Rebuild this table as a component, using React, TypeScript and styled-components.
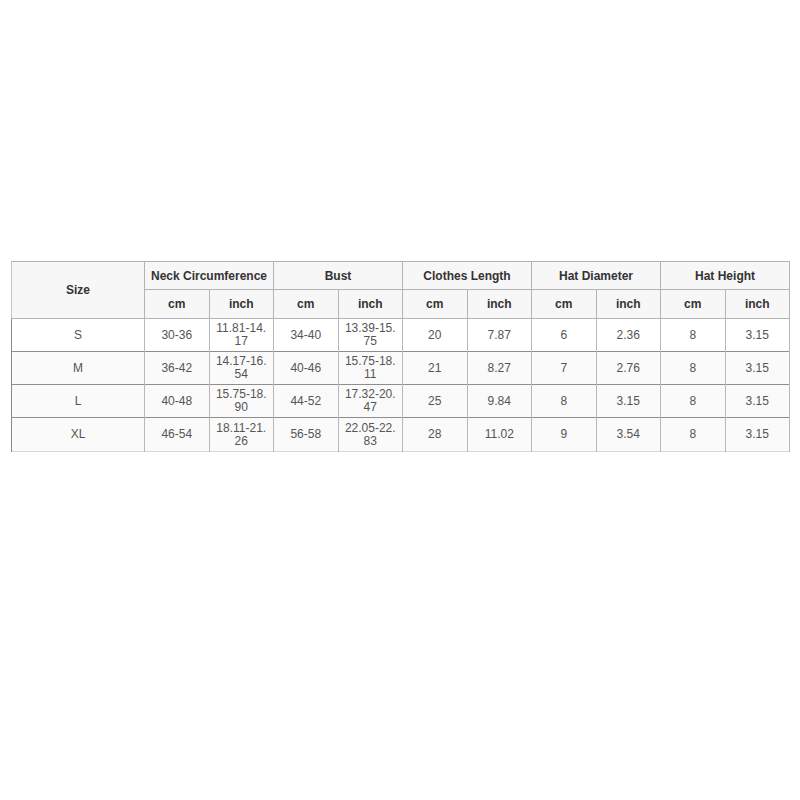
import React from 'react';
import styled, {createGlobalStyle} from 'styled-components';

const GlobalStyle = createGlobalStyle`
  body {
    margin: 0;
    background: #fff;
    font-family: "Liberation Sans", Arial, sans-serif;
  }
`;

const Page = styled.div`
  width: 800px;
  height: 800px;
  padding: 261px 0 0 11px;
  box-sizing: border-box;
`;

const Table = styled.table`
  width: 779px;
  border-collapse: collapse;
  table-layout: fixed;
  border-left: 1px solid #8a8a8a;
  border-right: 1px solid #a8a8a8;
  border-top: 1px solid #a0a0a0;
  border-bottom: 1px solid #d8d8d8;
`;

const Head = styled.th<{ $tall?: boolean }>`
  background: #f7f7f7;
  color: #333;
  font-size: 12px;
  font-weight: bold;
  height: ${(p) => (p.$tall ? 27 : 28)}px;
  padding: 0;
  text-align: center;
  border: 1px solid #b4b4b4;
  border-left-color: #c4c4c4;
`;

const Row = styled.tr<{ $shade?: boolean }>`
  background: ${(p) => (p.$shade ? '#fafafa' : '#fff')};
`;

const Cell = styled.td<{ $first?: boolean; $last?: boolean }>`
  height: ${(p) => (p.$last ? 33 : 32)}px;
  padding: 0 2px;
  text-align: center;
  color: #555;
  font-size: 12px;
  line-height: 13px;
  white-space: pre-line;
  border-left: 1px solid ${(p) => (p.$first ? '#8a8a8a' : '#b8b8b8')};
  border-right: 1px solid #b8b8b8;
  border-top: 1px solid #8e8e8e;
`;

const groups = ['Neck Circumference', 'Bust', 'Clothes Length', 'Hat Diameter', 'Hat Height'];

const rows = [
  ['S', '30-36', '11.81-14.\n17', '34-40', '13.39-15.\n75', '20', '7.87', '6', '2.36', '8', '3.15'],
  ['M', '36-42', '14.17-16.\n54', '40-46', '15.75-18.\n11', '21', '8.27', '7', '2.76', '8', '3.15'],
  ['L', '40-48', '15.75-18.\n90', '44-52', '17.32-20.\n47', '25', '9.84', '8', '3.15', '8', '3.15'],
  ['XL', '46-54', '18.11-21.\n26', '56-58', '22.05-22.\n83', '28', '11.02', '9', '3.54', '8', '3.15'],
];

const App = () => (
  <>
    <GlobalStyle />
    <Page>
      <Table>
        <colgroup>
          <col style={{ width: 133 }} />
          {Array.from({ length: 10 }).map((_, i) => (
            <col key={i} style={{ width: 64.5 }} />
          ))}
        </colgroup>
        <thead>
          <tr>
            <Head rowSpan={2}>Size</Head>
            {groups.map((g) => (
              <Head key={g} colSpan={2} $tall>
                {g}
              </Head>
            ))}
          </tr>
          <tr>
            {groups.map((g) => (
              <React.Fragment key={g}>
                <Head>cm</Head>
                <Head>inch</Head>
              </React.Fragment>
            ))}
          </tr>
        </thead>
        <tbody>
          {rows.map((r, ri) => (
            <Row key={r[0]} $shade={ri > 0}>
              {r.map((v, i) => (
                <Cell
                  key={i}
                  $first={i === 0}
                  $last={ri === rows.length - 1}
                  style={ri === 0 ? { borderTopColor: '#f0f0f0' } : undefined}
                >
                  {v}
                </Cell>
              ))}
            </Row>
          ))}
        </tbody>
      </Table>
    </Page>
  </>
);

export default App;
